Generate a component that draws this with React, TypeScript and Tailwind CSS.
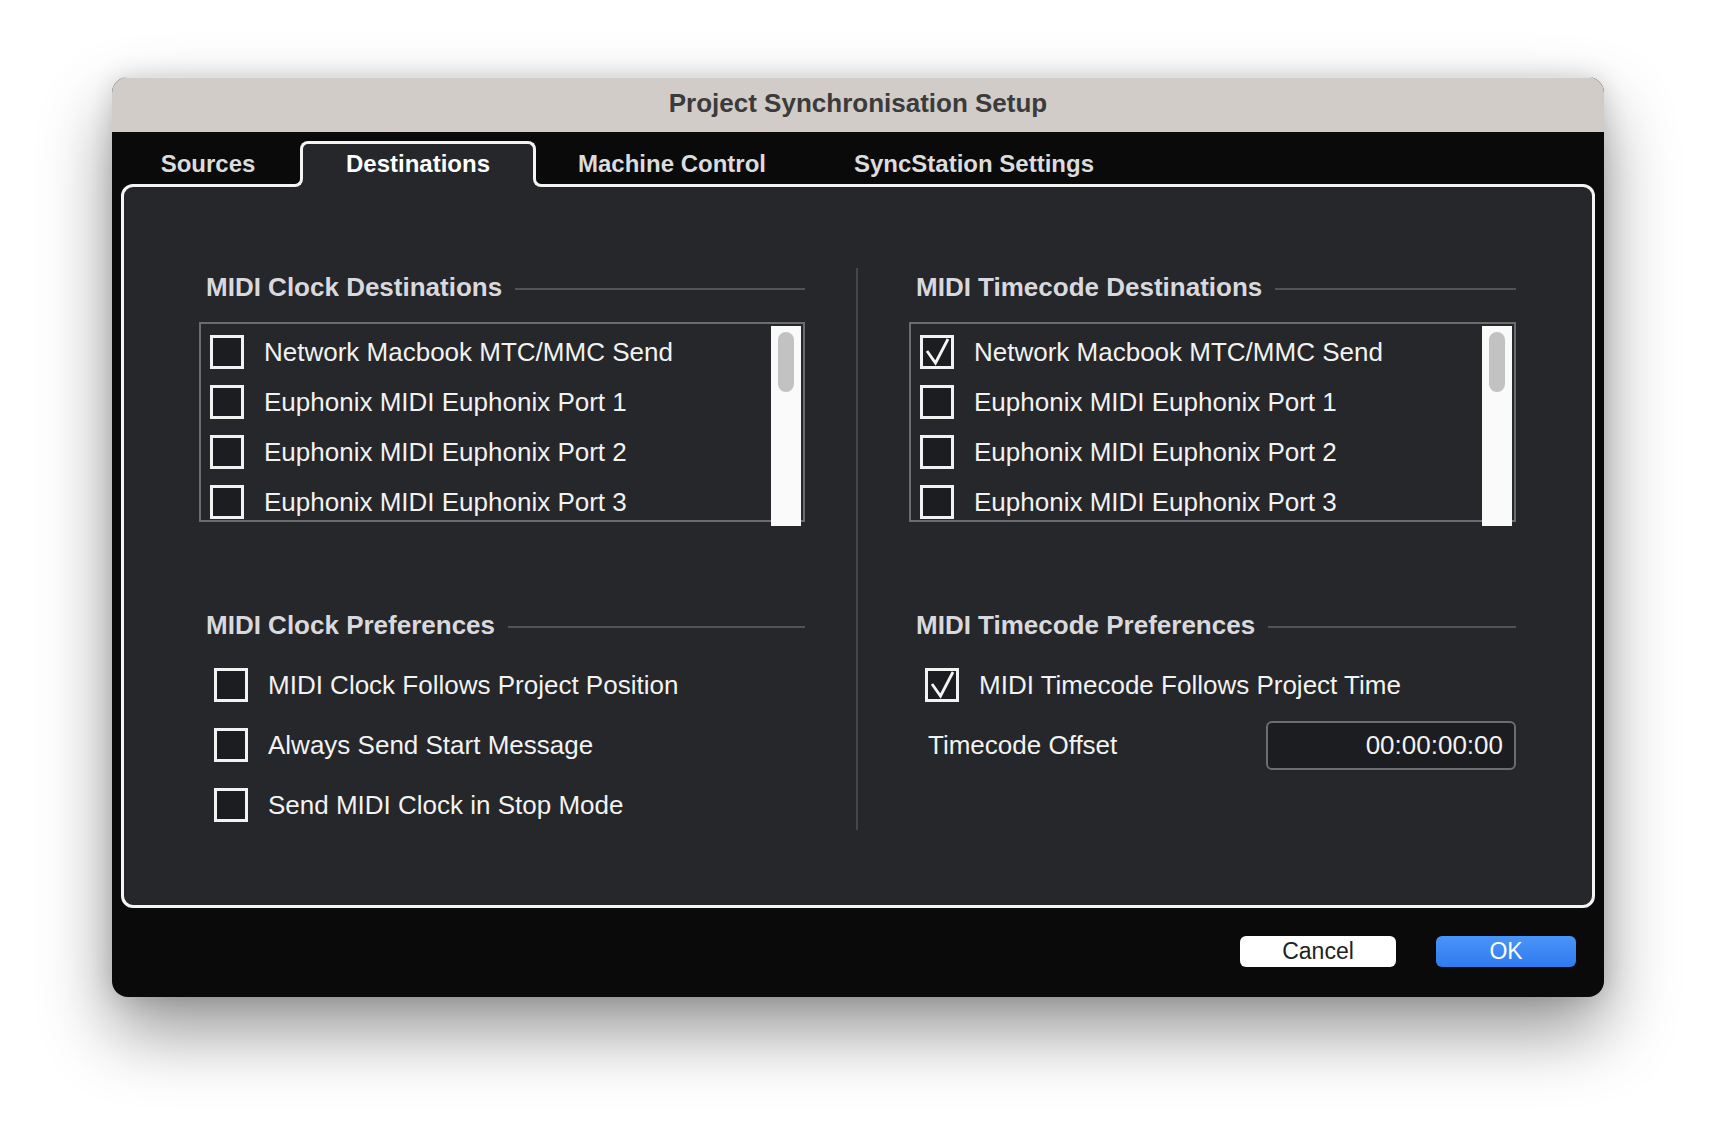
const font = { fontFamily: '"Liberation Sans", Arial, sans-serif' };

function CheckBox({ checked = false }: { checked?: boolean }) {
  return (
    <div className="w-[34px] h-[34px] shrink-0 border-[3px] border-[#f2f2f2] bg-[#1c1d20] flex items-center justify-center">
      {checked && (
        <svg width="28" height="28" viewBox="0 0 28 28" fill="none">
          <path d="M4 13 L12.5 25 L25 1" stroke="#f4f4f4" strokeWidth="2.8" strokeLinejoin="miter" />
        </svg>
      )}
    </div>
  );
}

function SectionHeader({ title }: { title: string }) {
  return (
    <div className="h-[38px] flex items-center gap-[13px] pl-[7px]">
      <span className="text-[26px] font-bold text-[#d9d9dd] leading-none whitespace-nowrap">{title}</span>
      <div className="flex-1 h-[2px] mt-[4px] bg-[#505357]" />
    </div>
  );
}

function ListBox({ items, checkedIndex }: { items: string[]; checkedIndex?: number }) {
  return (
    <div className="relative mt-[16px] h-[200px] border-2 border-[#6a6c70]">
      <div className="h-full overflow-hidden pt-[3px]">
        {items.map((item, i) => (
          <div key={i} className="h-[50px] flex items-center gap-[20px] pl-[9px]">
            <CheckBox checked={i === checkedIndex} />
            <span className="text-[26px] leading-[28px] text-[#f2f2f2] whitespace-nowrap">{item}</span>
          </div>
        ))}
      </div>
      {/* scroll track */}
      <div className="absolute top-[2px] right-[2px] w-[30px] h-[200px] bg-[#fafafa]">
        <div className="mx-auto mt-[6px] w-[16px] h-[60px] rounded-full bg-[#c2c2c2]" />
      </div>
    </div>
  );
}

const destinations = [
  "Network Macbook MTC/MMC Send",
  "Euphonix MIDI Euphonix Port 1",
  "Euphonix MIDI Euphonix Port 2",
  "Euphonix MIDI Euphonix Port 3",
];

const clockPrefs = [
  "MIDI Clock Follows Project Position",
  "Always Send Start Message",
  "Send MIDI Clock in Stop Mode",
];

const tabs = [
  { label: "Sources", w: "w-[184px]" },
  { label: "Destinations", w: "w-[236px]", active: true },
  { label: "Machine Control", w: "w-[272px]" },
  { label: "SyncStation Settings", w: "w-[332px]" },
];

export default function App() {
  return (
    <div className="w-[1716px] h-[1146px] bg-white pt-[77px] pl-[112px]" style={font}>
      <div className="w-[1492px] h-[920px] rounded-[16px] overflow-hidden bg-[#0a0a0b] flex flex-col shadow-[0_34px_70px_rgba(0,0,0,0.42),0_0_24px_rgba(0,0,0,0.14)]">
        {/* Title bar */}
        <div className="h-[55px] shrink-0 bg-[#d1ccc8] border-t border-[#e4e0dc] flex items-center justify-center pb-[4px]">
          <span className="text-[26px] font-bold text-[#3b3b3b]">Project Synchronisation Setup</span>
        </div>

        {/* Tabs */}
        <div className="h-[55px] shrink-0 flex items-end pl-[4px]">
          {tabs.map((t) =>
            t.active ? (
              <div
                key={t.label}
                className={`${t.w} relative z-10 h-[46px] border-t-[3px] border-x-[3px] border-[#f4f4f4] rounded-t-[8px] bg-[#25272a] flex items-center justify-center pb-[3px]`}
              >
                <span className="text-[24px] font-bold text-white">{t.label}</span>
                <div className="absolute bottom-0 left-[-11px] w-[11px] h-[11px] bg-[#25272a]">
                  <div className="w-full h-full bg-[#0a0a0b] border-r-[3px] border-b-[3px] border-[#f4f4f4] rounded-br-[8px]" />
                </div>
                <div className="absolute bottom-0 right-[-11px] w-[11px] h-[11px] bg-[#25272a]">
                  <div className="w-full h-full bg-[#0a0a0b] border-l-[3px] border-b-[3px] border-[#f4f4f4] rounded-bl-[8px]" />
                </div>
              </div>
            ) : (
              <div key={t.label} className={`${t.w} h-[46px] flex items-center justify-center pb-[1px]`}>
                <span className="text-[24px] font-bold text-[#dcdcdc]">{t.label}</span>
              </div>
            )
          )}
        </div>

        {/* Panel */}
        <div className="-mt-[3px] mx-[9px] h-[724px] shrink-0 rounded-[12px] border-[3px] border-[#f4f4f4] bg-[#25272a] pt-[81px] pl-[75px] flex">
          {/* Left column */}
          <div className="w-[606px]">
            <SectionHeader title="MIDI Clock Destinations" />
            <ListBox items={destinations} />
            <div className="mt-[84px]">
              <SectionHeader title="MIDI Clock Preferences" />
              <div className="mt-[11px]">
                {clockPrefs.map((p) => (
                  <div key={p} className="h-[60px] flex items-center gap-[20px] pl-[15px]">
                    <CheckBox />
                    <span className="text-[26px] text-[#f2f2f2] whitespace-nowrap">{p}</span>
                  </div>
                ))}
              </div>
            </div>
          </div>

          {/* Divider */}
          <div className="ml-[51px] mr-[51px] w-[2px] h-[562px] bg-[#45474b]" />

          {/* Right column */}
          <div className="w-[607px]">
            <SectionHeader title="MIDI Timecode Destinations" />
            <ListBox items={destinations} checkedIndex={0} />
            <div className="mt-[84px]">
              <SectionHeader title="MIDI Timecode Preferences" />
              <div className="mt-[11px]">
                <div className="h-[60px] flex items-center gap-[20px] pl-[16px]">
                  <CheckBox checked />
                  <span className="text-[26px] text-[#f2f2f2] whitespace-nowrap">MIDI Timecode Follows Project Time</span>
                </div>
                <div className="h-[60px] flex items-center justify-between pl-[19px]">
                  <span className="text-[26px] text-[#f2f2f2]">Timecode Offset</span>
                  <div className="w-[250px] h-[49px] rounded-[6px] border-2 border-[#6b6d71] bg-[#1c1d21] flex items-center justify-end pr-[11px]">
                    <span className="text-[26px] text-[#f2f2f2]">00:00:00:00</span>
                  </div>
                </div>
              </div>
            </div>
          </div>
        </div>

        {/* Footer */}
        <div className="flex-1 flex justify-end items-start pt-[28px] pr-[28px] gap-[40px]">
          <button className="w-[156px] h-[31px] rounded-[6px] bg-white text-[23px] text-[#222] leading-none flex items-center justify-center">
            Cancel
          </button>
          <button className="w-[140px] h-[31px] rounded-[6px] bg-gradient-to-b from-[#4a94f8] to-[#2f7bf0] text-[23px] text-white leading-none flex items-center justify-center">
            OK
          </button>
        </div>
      </div>
    </div>
  );
}
